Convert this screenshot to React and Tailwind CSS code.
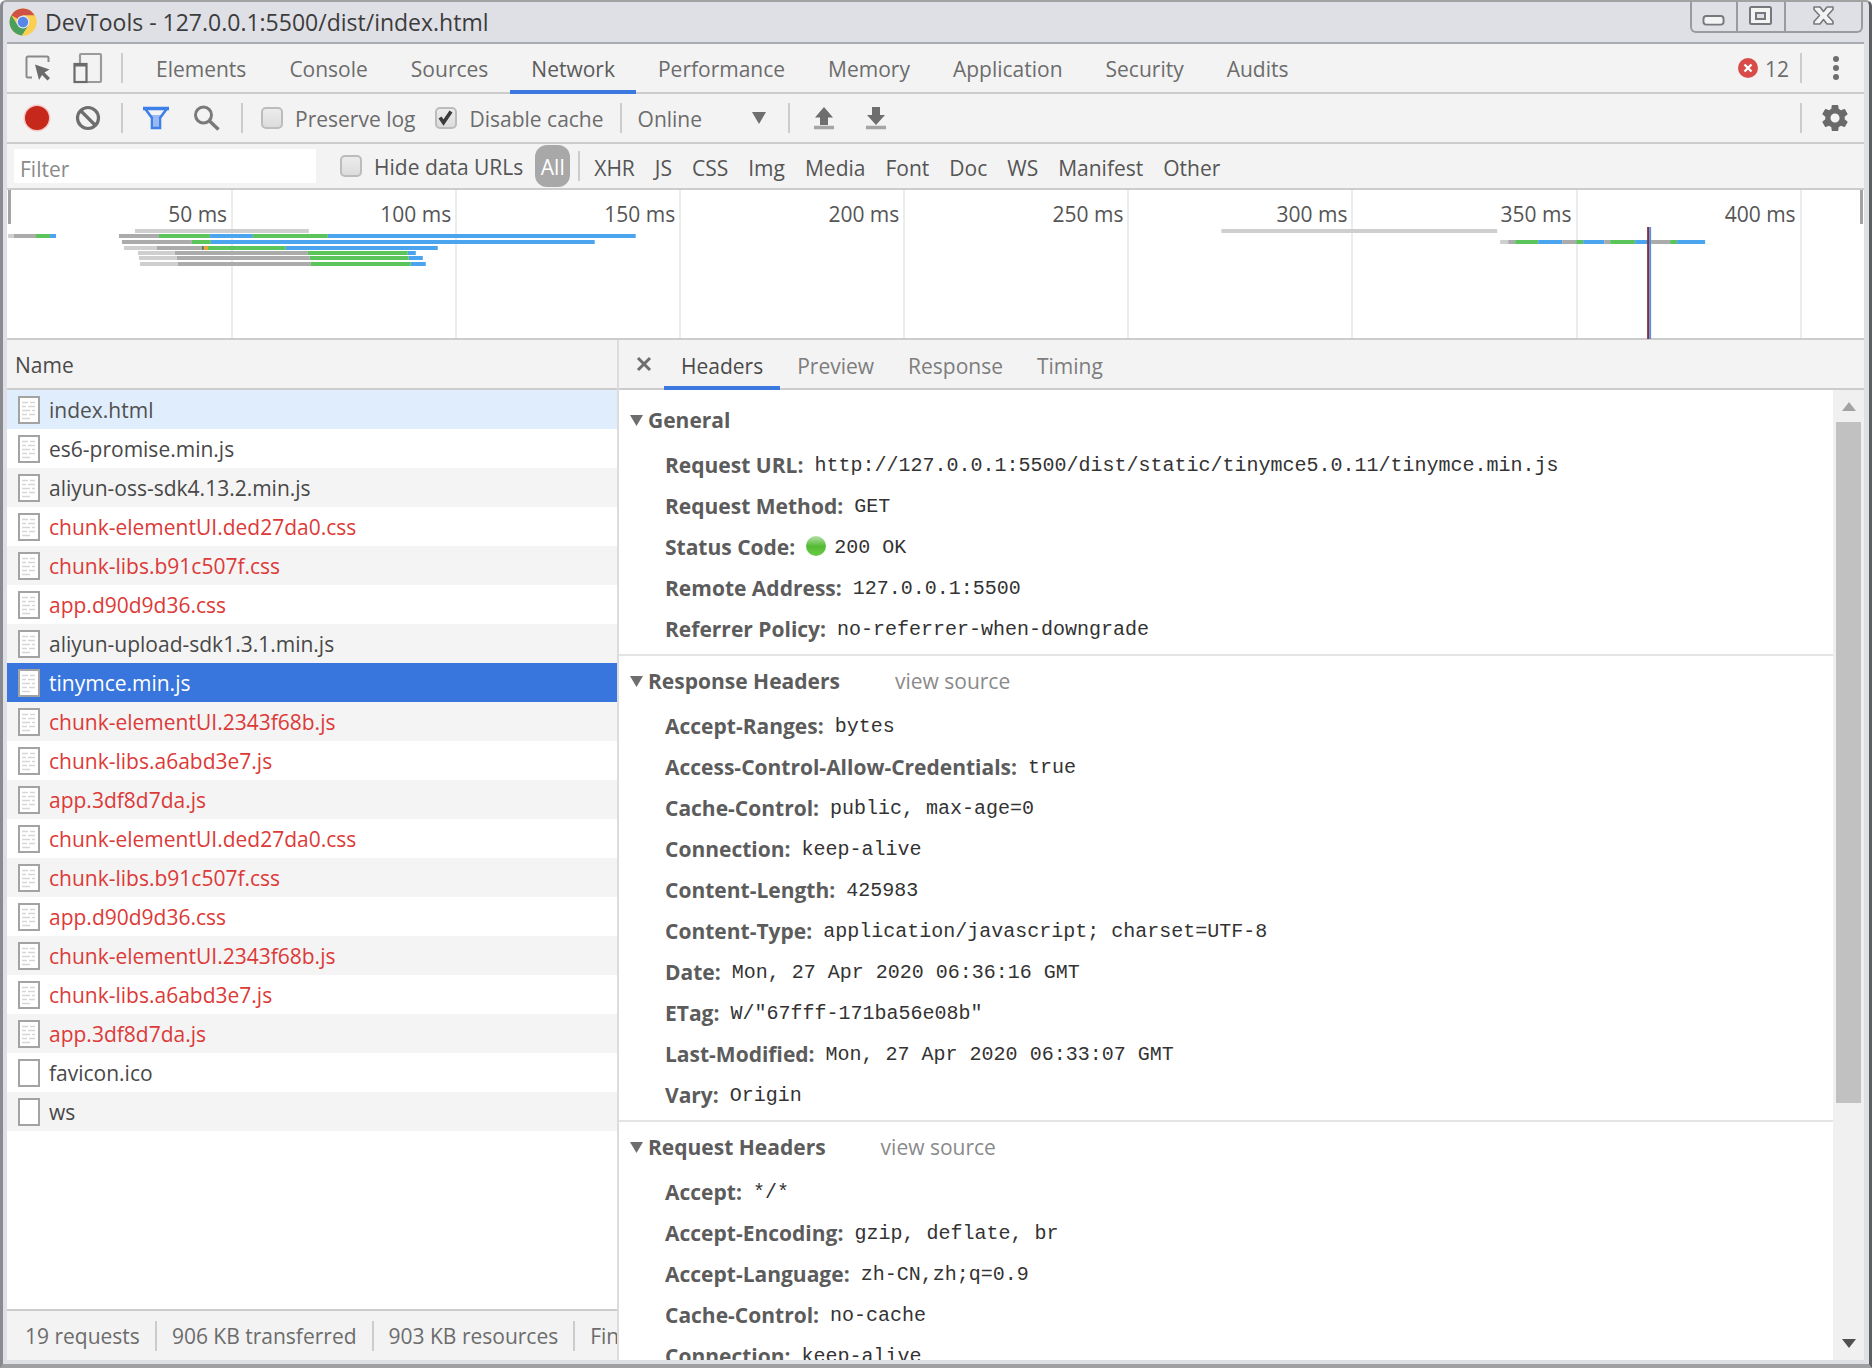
import React, { useState } from 'react';

const panels = [
  'Elements',
  'Console',
  'Sources',
  'Network',
  'Performance',
  'Memory',
  'Application',
  'Security',
  'Audits',
];

const resourceTypes = ['XHR', 'JS', 'CSS', 'Img', 'Media', 'Font', 'Doc', 'WS', 'Manifest', 'Other'];

const ticks = [50, 100, 150, 200, 250, 300, 350, 400];

const requests = [
  { name: 'index.html', doc: true },
  { name: 'es6-promise.min.js', doc: true },
  { name: 'aliyun-oss-sdk4.13.2.min.js', doc: true },
  { name: 'chunk-elementUI.ded27da0.css', doc: true, failed: true },
  { name: 'chunk-libs.b91c507f.css', doc: true, failed: true },
  { name: 'app.d90d9d36.css', doc: true, failed: true },
  { name: 'aliyun-upload-sdk1.3.1.min.js', doc: true },
  { name: 'tinymce.min.js', doc: true },
  { name: 'chunk-elementUI.2343f68b.js', doc: true, failed: true },
  { name: 'chunk-libs.a6abd3e7.js', doc: true, failed: true },
  { name: 'app.3df8d7da.js', doc: true, failed: true },
  { name: 'chunk-elementUI.ded27da0.css', doc: true, failed: true },
  { name: 'chunk-libs.b91c507f.css', doc: true, failed: true },
  { name: 'app.d90d9d36.css', doc: true, failed: true },
  { name: 'chunk-elementUI.2343f68b.js', doc: true, failed: true },
  { name: 'chunk-libs.a6abd3e7.js', doc: true, failed: true },
  { name: 'app.3df8d7da.js', doc: true, failed: true },
  { name: 'favicon.ico' },
  { name: 'ws' },
];

const sections = [
  {
    title: 'General',
    rows: [
      ['Request URL', 'http://127.0.0.1:5500/dist/static/tinymce5.0.11/tinymce.min.js'],
      ['Request Method', 'GET'],
      ['Status Code', '200 OK'],
      ['Remote Address', '127.0.0.1:5500'],
      ['Referrer Policy', 'no-referrer-when-downgrade'],
    ],
  },
  {
    title: 'Response Headers',
    source: true,
    rows: [
      ['Accept-Ranges', 'bytes'],
      ['Access-Control-Allow-Credentials', 'true'],
      ['Cache-Control', 'public, max-age=0'],
      ['Connection', 'keep-alive'],
      ['Content-Length', '425983'],
      ['Content-Type', 'application/javascript; charset=UTF-8'],
      ['Date', 'Mon, 27 Apr 2020 06:36:16 GMT'],
      ['ETag', 'W/"67fff-171ba56e08b"'],
      ['Last-Modified', 'Mon, 27 Apr 2020 06:33:07 GMT'],
      ['Vary', 'Origin'],
    ],
  },
  {
    title: 'Request Headers',
    source: true,
    rows: [
      ['Accept', '*/*'],
      ['Accept-Encoding', 'gzip, deflate, br'],
      ['Accept-Language', 'zh-CN,zh;q=0.9'],
      ['Cache-Control', 'no-cache'],
      ['Connection', 'keep-alive'],
    ],
  },
];

const LIGHT = '#cfcfcf';
const GRAY = '#ababab';
const GREEN = '#5bc55b';
const BLUE = '#4aa5ee';

// each bar: y, start x, then [end x, color] segments
const bars = [
  [39, 128, [302, LIGHT]],
  [39, 1215, [1491, LIGHT]],
  [44, 1, [7, LIGHT], [29, GRAY], [43, GREEN], [49, BLUE]],
  [44, 112, [152, GRAY], [203, GREEN], [246, BLUE], [321, GREEN], [629, BLUE]],
  [50, 115, [185, GRAY], [204, GREEN], [588, BLUE]],
  [56, 117, [150, LIGHT], [195, GRAY], [197, '#4d7d63'], [201, '#f0a030'], [279, GREEN], [431, BLUE]],
  [61, 131, [168, LIGHT], [301, GRAY], [401, GREEN], [409, BLUE]],
  [66, 132, [170, LIGHT], [303, GRAY], [402, GREEN], [416, BLUE]],
  [72, 133, [171, LIGHT], [304, GRAY], [404, GREEN], [419, BLUE]],
  [
    50, 1494, [1502, LIGHT], [1509, GRAY], [1532, GREEN], [1556, BLUE], [1570, GRAY], [1577, GREEN],
    [1598, BLUE], [1604, GRAY], [1629, GREEN], [1645, BLUE], [1664, GRAY], [1671, GREEN], [1699, BLUE],
  ],
];

const Separator = () => <span className="h-[30px] w-[2px] shrink-0 bg-[#cccccc]" />;

const Checkbox = ({ id, label, checked, onChange }) => (
  <div className="flex items-center gap-3">
    <span className="relative flex size-[22px]">
      <input
        id={id}
        type="checkbox"
        checked={checked}
        onChange={(e) => onChange(e.target.checked)}
        className="size-[22px] appearance-none rounded-[5px] border-2 border-[#bcbcbc] bg-linear-to-b from-[#ececec] to-[#dcdcdc]"
      />
      {checked && (
        <svg viewBox="0 0 22 22" className="pointer-events-none absolute inset-0 size-[22px]">
          <path d="M5 10.500l3.500 5L16 4.500" fill="none" stroke="#3a3a3a" strokeWidth="3.600" />
        </svg>
      )}
    </span>
    <label htmlFor={id} className="pt-[2px]">
      {label}
    </label>
  </div>
);

const ChromeLogo = () => (
  <svg viewBox="0 0 28 28" className="size-7">
    <circle cx="14" cy="14" r="13.500" fill="#fbcf52" />
    <path d="M14 14L2.300 7.250A13.500 13.500 0 0 1 25.700 7.500L14 7.500z" fill="#cf5246" />
    <path d="M2.300 7.250A13.500 13.500 0 0 0 13 27.500L19.500 17.500L14 14L8 16z" fill="#4a9f5c" />
    <path d="M14 7.500h11.700A13.500 13.500 0 0 1 13 27.500l6.600-10.200z" fill="#fbcf52" />
    <circle cx="14" cy="14" r="6.500" fill="#e4e8f2" />
    <circle cx="14" cy="14" r="5.200" fill="#5687e8" />
  </svg>
);

const FileIcon = ({ lines }) => (
  <svg viewBox="0 0 22 28" className="h-7 w-[22px] shrink-0">
    <rect x="1" y="1" width="20" height="26" fill="#fff" stroke="#a3a3a3" strokeWidth="2" />
    {lines && (
      <path
        d="M4 6.500h6m2 0h5M4 10.500h4m2 0h7M4 14.500h8m2 0h3M4 18.500h5m2 0h6M4 22.500h8"
        stroke="#d6d6d6"
        strokeWidth="1.500"
      />
    )}
  </svg>
);

const TitleBar = () => (
  <header className="flex h-[42px] shrink-0 items-center border-b-2 border-[#abacb3] bg-[#dfe0e6] pl-[2px] text-[#3c3c3c]">
    <ChromeLogo />
    <h1 className="ml-2 text-[23px]">DevTools - 127.0.0.1:5500/dist/index.html</h1>
    <div className="mr-px ml-auto flex h-[31px] self-start overflow-hidden rounded-b-md border-2 border-t-0 border-[#9a9ba0]">
      <button aria-label="Minimize" className="w-[46px] border-r-2 border-[#9a9ba0]">
        <svg viewBox="0 0 46 29" className="h-[29px] w-11">
          <rect x="12" y="14" width="21" height="9" rx="3" fill="#f4f4f4" stroke="#77787d" strokeWidth="2" />
        </svg>
      </button>
      <button aria-label="Maximize" className="w-12 border-r-2 border-[#9a9ba0]">
        <svg viewBox="0 0 46 29" className="h-[29px] w-[46px]">
          <rect x="12" y="5" width="21" height="17" rx="1.500" fill="#f4f4f4" stroke="#77787d" strokeWidth="2" />
          <rect x="18" y="11" width="9" height="6" fill="#dfe0e6" stroke="#77787d" strokeWidth="2" />
        </svg>
      </button>
      <button aria-label="Close window" className="w-[75px]">
        <svg viewBox="0 0 75 29" className="h-[29px] w-[75px]">
          <path
            d="M28 5h6l3.500 4.500L41 5h6v2.500L41.500 13.500L47 19.500V22h-6l-3.500-4.500L34 22h-6v-2.500l5.500-6L28 7.500z"
            fill="#f4f4f4"
            stroke="#77787d"
            strokeWidth="1.600"
            strokeLinejoin="round"
          />
        </svg>
      </button>
    </div>
  </header>
);

const PanelTabs = ({ active, onSelect }) => (
  <nav className="flex h-[50px] shrink-0 items-center border-b-2 border-[#cccccc] pl-[18px]">
    <button aria-label="Select an element">
      <svg viewBox="0 0 26 26" className="size-[26px]">
        <path
          d="M7 22.500H3a1.500 1.500 0 0 1-1.500-1.500V3A1.500 1.500 0 0 1 3 1.500h19A1.500 1.500 0 0 1 23.500 3v4"
          fill="none"
          stroke="#8a8a8a"
          strokeWidth="2"
        />
        <path d="M10 9.500l14.500 5-5 3 5.500 5.500-2.500 2.500-5.500-5.500-3 5z" fill="#6b6b6b" />
      </svg>
    </button>
    <button aria-label="Toggle device toolbar" className="ml-[22px]">
      <svg viewBox="0 0 30 32" className="h-8 w-[30px]">
        <path d="M7 11V3a1 1 0 0 1 1-1h19a1 1 0 0 1 1 1v26a1 1 0 0 1-1 1H14" fill="none" stroke="#9a9a9a" strokeWidth="2.200" />
        <rect x="1.500" y="12" width="12" height="18" fill="#f3f3f3" stroke="#6b6b6b" strokeWidth="2.200" />
        <path d="M1 13h13" stroke="#6b6b6b" strokeWidth="3" />
      </svg>
    </button>
    <div className="mr-3 ml-[18px] flex">
      <Separator />
    </div>
    <div className="flex gap-px">
      {panels.map((panel) => (
        <button
          key={panel}
          onClick={() => onSelect(panel)}
          className={`mt-[2px] h-[50px] border-b-4 px-[21px] pt-1 ${
            panel === active ? 'border-[#3b78e0] text-[#5a5a5a]' : 'border-transparent text-[#6c6c6c]'
          }`}
        >
          {panel}
        </button>
      ))}
    </div>
    <div className="ml-auto flex items-center">
      <svg viewBox="0 0 20 20" className="size-5">
        <circle cx="10" cy="10" r="10" fill="#d84b48" />
        <path d="M6.500 6.500l7 7m0-7l-7 7" stroke="#fff" strokeWidth="2.400" />
      </svg>
      <span className="mr-[11px] ml-[7px] pt-[2px] text-[#6c6c6c]">12</span>
      <Separator />
      <button aria-label="More options" className="mr-6 ml-[30px]">
        <svg viewBox="0 0 8 26" className="h-[26px] w-2">
          <circle cx="4" cy="4" r="3" fill="#6e6e6e" />
          <circle cx="4" cy="13" r="3" fill="#6e6e6e" />
          <circle cx="4" cy="22" r="3" fill="#6e6e6e" />
        </svg>
      </button>
    </div>
  </nav>
);

const Toolbar = () => {
  const [preserveLog, setPreserveLog] = useState(false);
  const [disableCache, setDisableCache] = useState(true);

  return (
    <div className="flex h-[50px] shrink-0 items-center border-b-2 border-[#cccccc] pl-4 text-[#6c6c6c]">
      <button aria-label="Record" className="mr-6">
        <svg viewBox="0 0 28 28" className="size-7">
          <circle cx="14" cy="14" r="13.500" fill="#f3c9c6" />
          <circle cx="14" cy="14" r="12" fill="#c6281c" />
        </svg>
      </button>
      <button aria-label="Clear" className="mr-5">
        <svg viewBox="0 0 26 26" className="size-[26px]">
          <circle cx="13" cy="13" r="10.500" fill="none" stroke="#6e6e6e" strokeWidth="3.200" />
          <path d="M6 6l14 14" stroke="#6e6e6e" strokeWidth="3.200" />
        </svg>
      </button>
      <Separator />
      <button aria-label="Filter" className="mr-6 ml-5">
        <svg viewBox="0 0 26 24" className="h-6 w-[26px]">
          <path d="M2 2.500h22L17 12v10.500H9V12z" fill="#f3f3f3" />
          <path d="M8 9h10l-2.500 3v9h-5v-9z" fill="#98b9f3" />
          <path d="M2 2.500h22L17 12v10H9V12z" fill="none" stroke="#3f7fe8" strokeWidth="2.600" />
          <path d="M0 2.500h26" stroke="#3f7fe8" strokeWidth="3.500" />
        </svg>
      </button>
      <button aria-label="Search" className="mr-5">
        <svg viewBox="0 0 28 26" className="h-[26px] w-7">
          <circle cx="10.500" cy="10" r="8" fill="none" stroke="#7a7a7a" strokeWidth="3" />
          <path d="M16 15.500l9.500 9" stroke="#7a7a7a" strokeWidth="3.500" />
        </svg>
      </button>
      <Separator />
      <div className="ml-[18px] flex items-center gap-5">
        <Checkbox id="preserve" label="Preserve log" checked={preserveLog} onChange={setPreserveLog} />
        <Checkbox id="cache" label="Disable cache" checked={disableCache} onChange={setDisableCache} />
      </div>
      <div className="ml-4 flex">
        <Separator />
      </div>
      <div className="relative ml-4 flex items-center">
        <select aria-label="Throttling" className="w-[130px] appearance-none bg-transparent pt-[2px]">
          <option>Online</option>
          <option>Offline</option>
        </select>
        <svg viewBox="0 0 14 12" className="pointer-events-none absolute right-[2px] h-3 w-[14px]">
          <path d="M0 0h14L7 12z" fill="#6e6e6e" />
        </svg>
      </div>
      <div className="ml-5 flex">
        <Separator />
      </div>
      <button aria-label="Import HAR" className="ml-6">
        <svg viewBox="0 0 20 24" className="h-6 w-5">
          <path d="M10 1l9 10.500h-5V19H6v-7.500H1z" fill="#6e6e6e" />
          <path d="M0 21.500h20" stroke="#a5a5a5" strokeWidth="3.500" />
        </svg>
      </button>
      <button aria-label="Export HAR" className="ml-8">
        <svg viewBox="0 0 20 24" className="h-6 w-5">
          <path d="M10 19L1 9h5V1h8v8h5z" fill="#6e6e6e" />
          <path d="M0 21.500h20" stroke="#a5a5a5" strokeWidth="3.500" />
        </svg>
      </button>
      <div className="ml-auto flex items-center">
        <Separator />
        <button aria-label="Settings" className="mr-4 ml-5">
          <svg viewBox="2 2 20 20" className="size-[26px]">
            <path
              fill="#6a6a6a"
              d="M19.430 12.980c.04-.32.07-.64.07-.98s-.03-.66-.07-.98l2.110-1.650c.19-.15.24-.42.12-.64l-2-3.460c-.12-.22-.39-.3-.61-.22l-2.490 1c-.52-.4-1.080-.73-1.690-.98l-.38-2.650C14.460 2.180 14.250 2 14 2h-4c-.25 0-.46.18-.49.42l-.38 2.650c-.61.25-1.170.59-1.690.98l-2.490-1c-.23-.09-.49 0-.61.22l-2 3.460c-.13.22-.07.49.12.64l2.110 1.650c-.04.32-.07.65-.07.98s.03.66.07.98l-2.110 1.650c-.19.15-.24.42-.12.64l2 3.460c.12.22.39.3.61.22l2.490-1c.52.4 1.080.73 1.690.98l.38 2.650c.03.24.24.42.49.42h4c.25 0 .46-.18.49-.42l.38-2.650c.61-.25 1.170-.59 1.690-.98l2.490 1c.23.09.49 0 .61-.22l2-3.460c.12-.22.07-.49-.12-.64l-2.110-1.650zM12 15.500c-1.930 0-3.500-1.570-3.500-3.500s1.570-3.500 3.500-3.500 3.500 1.570 3.500 3.500-1.570 3.500-3.500 3.500z"
            />
          </svg>
        </button>
      </div>
    </div>
  );
};

const FilterBar = () => {
  const [hideData, setHideData] = useState(false);
  const [filter, setFilter] = useState('');

  return (
    <div className="flex h-[46px] shrink-0 items-center border-b-2 border-[#cccccc] pl-[7px] text-[#555555]">
      <input
        type="text"
        aria-label="Filter requests"
        placeholder="Filter"
        value={filter}
        onChange={(e) => setFilter(e.target.value)}
        className="mr-6 h-[34px] w-[302px] bg-white px-[6px] pt-[6px] outline-none placeholder:text-[#8a8a8a]"
      />
      <Checkbox id="hide" label="Hide data URLs" checked={hideData} onChange={setHideData} />
      <button className="mr-2 ml-3 h-[42px] w-[35px] rounded-xl bg-[#a8a8a8] pt-[2px] text-white">All</button>
      <Separator />
      <div className="ml-[14px] flex gap-5 pt-1">
        {resourceTypes.map((type) => (
          <button key={type}>{type}</button>
        ))}
      </div>
    </div>
  );
};

const Overview = () => (
  <div className="relative flex h-[150px] shrink-0 border-b-2 border-[#cccccc] bg-white pl-[2px]">
    {ticks.map((tick) => (
      <div key={tick} className="w-[12.08%] border-r-2 border-[#ececec] pt-[10px] pr-1 text-right text-[#555555]">
        {tick} ms
      </div>
    ))}
    <svg viewBox="0 0 1858 150" preserveAspectRatio="none" className="absolute inset-0 h-[150px] w-full">
      {bars.map(([y, start, ...segments]) =>
        segments.map(([end, color], i) => {
          const from = i === 0 ? start : segments[i - 1][0];
          return <rect key={`${y}-${end}`} x={from} y={y} width={end - from} height="4" fill={color} />;
        })
      )}
      <rect x="1641" y="37" width="2" height="112" fill="#8c2f35" />
      <rect x="1643" y="37" width="2" height="112" fill="#5a8fdc" />
      <rect x="1" y="0" width="3" height="34" fill="#a3a3a3" />
      <rect x="1854" y="0" width="3" height="34" fill="#a3a3a3" />
    </svg>
  </div>
);

const RequestList = ({ selected, onSelect }) => (
  <section className="flex w-[612px] shrink-0 flex-col border-r-2 border-[#dcdcdc]">
    <div className="min-h-0 flex-1 overflow-hidden bg-white">
      <table className="w-full">
        <thead>
          <tr className="h-[49px] border-b-2 border-[#cccccc] bg-[#f3f3f3]">
            <th className="pt-[2px] pl-2 text-left font-normal text-[#4a4a4a]">Name</th>
          </tr>
        </thead>
        <tbody>
          {requests.map((request, index) => (
            <tr
              key={index}
              onClick={() => onSelect(index)}
              className={`h-[39px] ${
                index === selected
                  ? 'bg-[#3875dc] text-white'
                  : index === 0
                  ? 'bg-[#e0edfc] text-[#505050]'
                  : index % 2 === 0
                  ? 'bg-[#f4f4f4]'
                  : 'bg-white'
              } ${index !== selected && (request.failed ? 'text-[#dc3a38]' : 'text-[#484848]')}`}
            >
              <td>
                <div className="flex h-[39px] items-center gap-[9px] pl-[11px]">
                  <FileIcon lines={request.doc} />
                  <span>{request.name}</span>
                </div>
              </td>
            </tr>
          ))}
        </tbody>
      </table>
    </div>
    <footer className="flex h-[51px] shrink-0 items-center gap-[15px] overflow-hidden border-t-2 border-[#cccccc] pl-[18px] whitespace-nowrap text-[#6c6c6c]">
      <span>19 requests</span>
      <Separator />
      <span>906 KB transferred</span>
      <Separator />
      <span>903 KB resources</span>
      <Separator />
      <span>Finish</span>
    </footer>
  </section>
);

const HeaderSection = ({ section }) => {
  const [open, setOpen] = useState(true);

  return (
    <section className="border-b-2 border-[#e4e4e4] pb-1">
      <div className="flex h-[50px] items-center pl-[11px]">
        <button onClick={() => setOpen(!open)} className="flex items-center gap-[5px] font-bold text-[#5c5c5c]">
          <svg viewBox="0 0 13 11" className="h-[11px] w-[13px]">
            <path d="M0 0h13L6.500 11z" fill="#6e6e6e" />
          </svg>
          {section.title}
        </button>
        {section.source && <button className="ml-[55px] text-[#8a8a8a]">view source</button>}
      </div>
      {open && (
        <dl className="pl-[46px]">
          {section.rows.map(([name, value]) => (
            <div key={name} className="flex h-[41px] items-center gap-[11px]">
              <dt className="pb-[2px] font-bold text-[#5c5c5c]">{name}:</dt>
              <dd className="flex items-center gap-2 font-['Liberation_Mono',monospace] text-[20px] text-[#333333]">
                {name === 'Status Code' && (
                  <span className="mb-1 size-5 rounded-full bg-linear-to-b from-[#b5dfa5] via-[#55bb33] to-[#6ccb49]" />
                )}
                {value}
              </dd>
            </div>
          ))}
        </dl>
      )}
    </section>
  );
};

const DetailPane = () => {
  const [tab, setTab] = useState('Headers');

  return (
    <section className="flex min-w-0 flex-1 flex-col">
      <nav className="flex h-[50px] shrink-0 items-center border-b-2 border-[#cccccc] pl-[17px]">
        <button aria-label="Close" className="mr-3">
          <svg viewBox="0 0 16 16" className="size-4">
            <path d="M2 2l12 12m0-12L2 14" stroke="#6e6e6e" strokeWidth="3" />
          </svg>
        </button>
        {['Headers', 'Preview', 'Response', 'Timing'].map((name) => (
          <button
            key={name}
            onClick={() => setTab(name)}
            className={`mt-[2px] h-[50px] border-b-4 px-[17px] pt-[6px] ${
              name === tab ? 'border-[#3b78e0] text-[#4a4a4a]' : 'border-transparent text-[#7d7d7d]'
            }`}
          >
            {name}
          </button>
        ))}
      </nav>
      <div className="flex min-h-0 flex-1 bg-white">
        <div className="min-w-0 flex-1 overflow-hidden pt-[5px]">
          {sections.map((section) => (
            <HeaderSection key={section.title} section={section} />
          ))}
        </div>
        <div className="flex w-[31px] shrink-0 flex-col items-center bg-[#f0f0f0] py-3">
          <svg viewBox="0 0 14 9" className="h-[9px] w-[14px] shrink-0">
            <path d="M0 9h14L7 0z" fill="#a3a3a3" />
          </svg>
          <div className="mt-[11px] h-[72%] w-[25px] bg-[#c1c1c1]" />
          <svg viewBox="0 0 14 9" className="mt-auto h-[9px] w-[14px] shrink-0">
            <path d="M0 0h14L7 9z" fill="#505050" />
          </svg>
        </div>
      </div>
    </section>
  );
};

const App = () => {
  const [panel, setPanel] = useState('Network');
  const [selected, setSelected] = useState(7);

  return (
    <div className="h-screen bg-white pb-[2px] font-['Open_Sans','Noto_Sans',sans-serif] text-[21px] leading-7">
      <div className="flex h-full flex-col overflow-hidden rounded-t-md border-t-2 border-r-[3px] border-b-4 border-l-[3px] border-t-[#a2a2a2] border-r-[#5c5e62] border-b-[#a0a0a2] border-l-[#8a8b90] bg-[#dfe0e6] pr-[5px] pb-1 pl-1">
        <TitleBar />
        <div className="flex min-h-0 flex-1 flex-col bg-[#f3f3f3]">
          <PanelTabs active={panel} onSelect={setPanel} />
          <Toolbar />
          <FilterBar />
          <Overview />
          <div className="flex min-h-0 flex-1">
            <RequestList selected={selected} onSelect={setSelected} />
            <DetailPane />
          </div>
        </div>
      </div>
    </div>
  );
};

export default App;
